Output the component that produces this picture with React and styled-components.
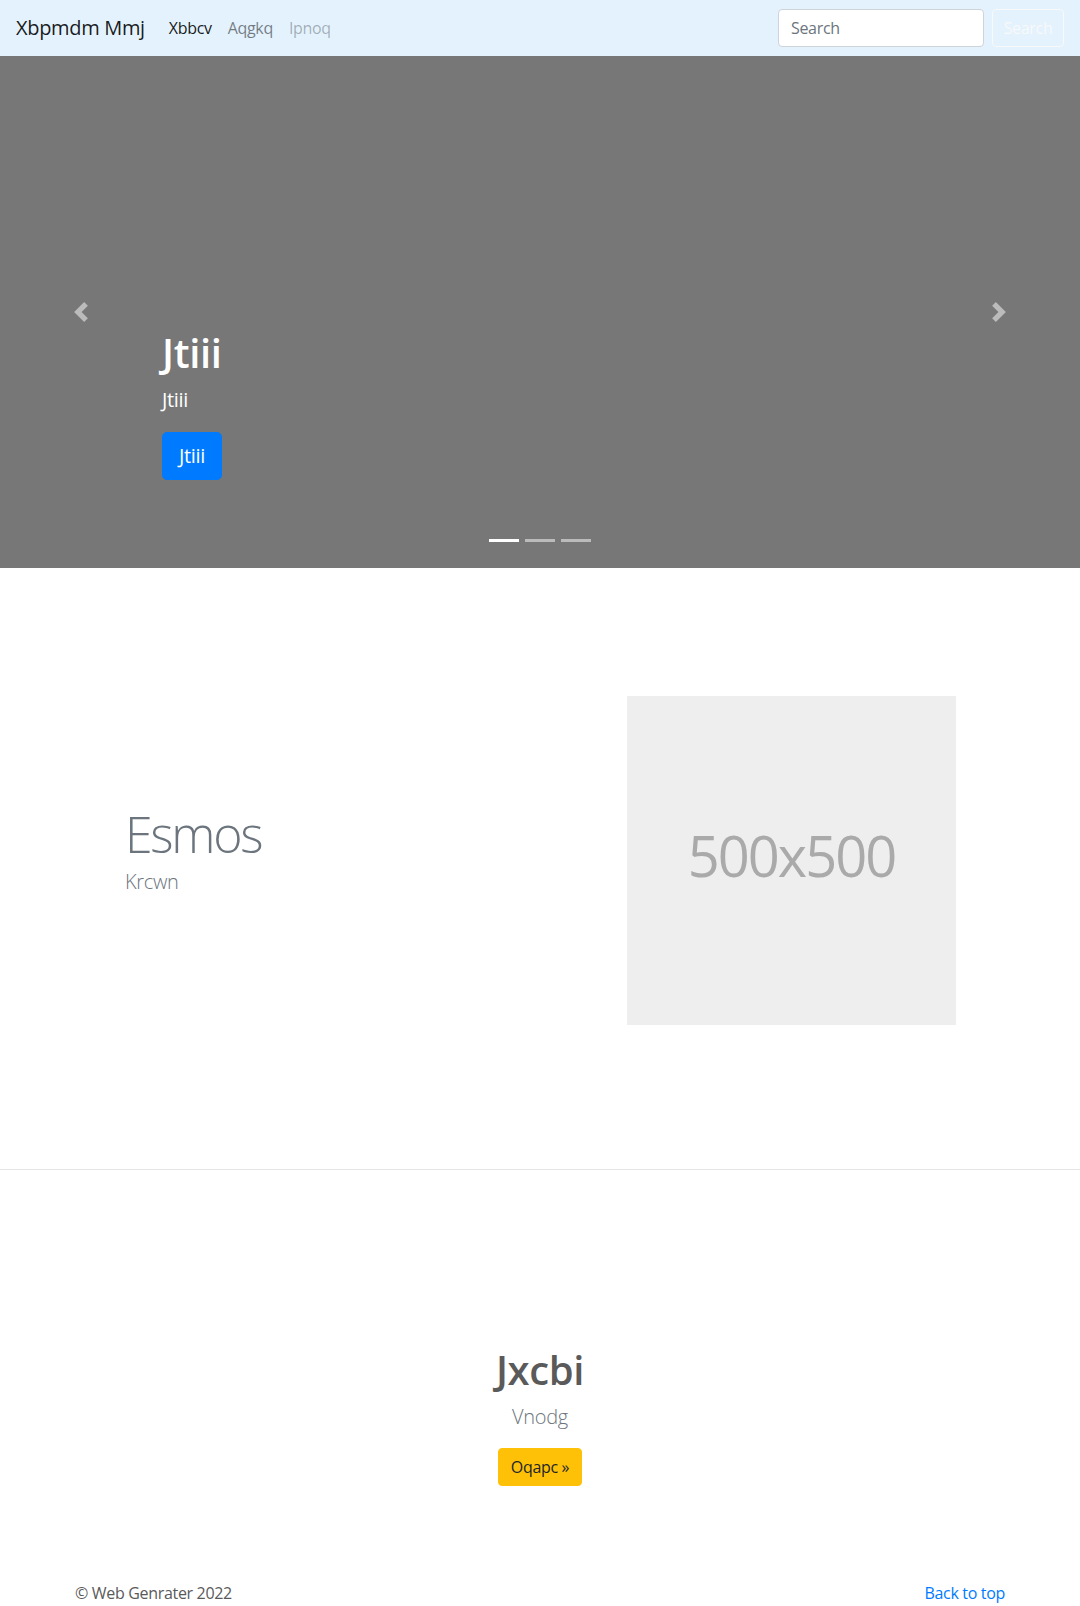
import React from "react";
import styled, { createGlobalStyle } from "styled-components";

const Global = createGlobalStyle`
  html, body { margin: 0; padding: 0; overflow: hidden; }
  body {
    font-family: "Open Sans", "Noto Sans", "Liberation Sans", sans-serif;
    font-size: 16px;
    line-height: 1.5;
    letter-spacing: -0.02em;
    color: #5a5a5a;
    background: #fff;
  }
  * { box-sizing: border-box; }
`;

const Navbar = styled.nav`
  display: flex;
  align-items: center;
  height: 56px;
  padding: 8px 16px;
  background: #e3f2fd;
`;

const Brand = styled.a`
  font-size: 20px;
  line-height: 30px;
  padding: 5px 0;
  margin-right: 16px;
  color: rgba(0, 0, 0, 0.9);
  text-decoration: none;
  white-space: nowrap;
`;

const NavList = styled.ul`
  display: flex;
  list-style: none;
  margin: 0;
  padding: 0;
`;

const NavLink = styled.a`
  display: block;
  padding: 8px;
  line-height: 24px;
  text-decoration: none;
  color: ${(p) =>
    p.$state === "active"
      ? "rgba(0,0,0,.9)"
      : p.$state === "disabled"
      ? "rgba(0,0,0,.3)"
      : "rgba(0,0,0,.5)"};
`;

const SearchForm = styled.form`
  display: flex;
  gap: 8px;
  margin-left: auto;
`;

const SearchInput = styled.input`
  width: 206px;
  height: 38px;
  padding: 6px 12px;
  font: inherit;
  font-size: 16px;
  letter-spacing: -0.02em;
  color: #495057;
  background: #fff;
  border: 1px solid #ced4da;
  border-radius: 4px;
  outline: none;
  &::placeholder { color: #6c757d; }
`;

const OutlineButton = styled.button`
  width: 72px;
  height: 38px;
  padding: 6px 0;
  font: inherit;
  font-size: 16px;
  letter-spacing: -0.02em;
  color: #f8f9fa;
  background: transparent;
  border: 1px solid #f8f9fa;
  border-radius: 4px;
`;

const Carousel = styled.section`
  position: relative;
  height: 512px;
  background: #777;
  display: flex;
  align-items: flex-end;
  padding: 0 15% 52px;
`;

const Caption = styled.div`
  padding: 20px 0;
  color: #fff;
  position: relative;
  z-index: 2;
`;

const CaptionTitle = styled.h1`
  margin: 0 0 8px;
  font-size: 40px;
  line-height: 1.2;
  font-weight: 600;
`;

const CaptionText = styled.p`
  margin: 0 0 ${(p) => p.$mb}px;
  font-size: 20px;
  line-height: 30px;
`;

const PrimaryLgButton = styled.a`
  display: inline-block;
  vertical-align: top;
  padding: 8px 16px;
  font-size: 20px;
  line-height: 30px;
  color: #fff;
  background: #007bff;
  border: 1px solid #007bff;
  border-radius: 4.8px;
  text-decoration: none;
`;

const Control = styled.a`
  position: absolute;
  top: 0;
  bottom: 0;
  ${(p) => (p.$side === "left" ? "left: 0;" : "right: 0;")}
  width: 15%;
  display: flex;
  align-items: center;
  justify-content: center;
  opacity: 0.5;
`;

const Indicators = styled.ol`
  position: absolute;
  left: 0;
  right: 0;
  bottom: 0;
  margin: 0 0 16px;
  padding: 0;
  list-style: none;
  display: flex;
  justify-content: center;
  z-index: 3;
`;

const Indicator = styled.li`
  width: 30px;
  height: 3px;
  margin: 10px 3px;
  background: #fff;
  opacity: ${(p) => (p.$active ? 1 : 0.5)};
`;

const Featurette = styled.section`
  display: flex;
  align-items: center;
  padding: 128px 124px 144px 125px;
  border-bottom: 1px solid rgba(0, 0, 0, 0.1);
`;

const FeatureText = styled.div`
  flex: 1;
`;

const FeatureHeading = styled.h2`
  margin: 0 0 8px;
  font-size: 50px;
  line-height: 1;
  font-weight: 300;
  letter-spacing: -2.3px;
  color: #6c757d;
`;

const Lead = styled.p`
  margin: 0 0 16px;
  font-size: 20px;
  line-height: 30px;
  font-weight: 300;
  color: #6c757d;
`;

const Placeholder = styled.svg`
  display: block;
  width: 329px;
  height: 329px;
  flex: none;
`;

const Highlight = styled.section`
  padding: 176px 0 96px;
  text-align: center;
`;

const HighlightHeading = styled.h2`
  margin: 0 0 8px;
  font-size: 40px;
  line-height: 1.2;
  font-weight: 600;
  letter-spacing: -0.01em;
  color: #5a5a5a;
`;

const WarningButton = styled.a`
  display: inline-block;
  vertical-align: top;
  padding: 6px 12px;
  font-size: 16px;
  line-height: 24px;
  color: #212529;
  background: #ffc107;
  border: 1px solid #ffc107;
  border-radius: 4px;
  text-decoration: none;
`;

const ButtonRow = styled.p`
  margin: 0;
`;

const Footer = styled.footer`
  max-width: 960px;
  margin: 0 auto;
  padding: 0 15px;
  display: flex;
  justify-content: space-between;
  line-height: 23px;
`;

const FooterText = styled.p`
  margin: 0;
  color: #5a5a5a;
`;

const FooterLink = styled.a`
  color: #007bff;
  text-decoration: none;
`;

const Chevron = ({ dir }) => (
  <svg width="20" height="20" viewBox="0 0 8 8" fill="#fff">
    {dir === "left" ? (
      <path d="M5.25 0l-4 4 4 4 1.5-1.5L4.25 4l2.5-2.5L5.25 0z" />
    ) : (
      <path d="M2.75 0l-1.5 1.5L3.75 4l-2.5 2.5L2.75 8l4-4-4-4z" />
    )}
  </svg>
);

export default function App() {
  return (
    <>
      <Global />
      <Navbar>
        <Brand href="#">Xbpmdm Mmj</Brand>
        <NavList>
          <li><NavLink href="#" $state="active">Xbbcv</NavLink></li>
          <li><NavLink href="#">Aqgkq</NavLink></li>
          <li><NavLink href="#" $state="disabled">Ipnoq</NavLink></li>
        </NavList>
        <SearchForm onSubmit={(e) => e.preventDefault()}>
          <SearchInput type="search" placeholder="Search" />
          <OutlineButton type="submit">Search</OutlineButton>
        </SearchForm>
      </Navbar>

      <Carousel>
        <Indicators>
          <Indicator $active />
          <Indicator />
          <Indicator />
        </Indicators>
        <Caption>
          <CaptionTitle>Jtiii</CaptionTitle>
          <CaptionText $mb={17}>Jtiii</CaptionText>
          <CaptionText $mb={16}>
            <PrimaryLgButton href="#">Jtiii</PrimaryLgButton>
          </CaptionText>
        </Caption>
        <Control href="#" $side="left"><Chevron dir="left" /></Control>
        <Control href="#" $side="right"><Chevron dir="right" /></Control>
      </Carousel>

      <Featurette>
        <FeatureText>
          <FeatureHeading>Esmos</FeatureHeading>
          <Lead>Krcwn</Lead>
        </FeatureText>
        <Placeholder viewBox="0 0 329 329">
          <rect width="100%" height="100%" fill="#eee" />
          <text
            x="50%"
            y="50%"
            dy=".3em"
            fill="#aaa"
            textAnchor="middle"
            fontSize="56"
            letterSpacing="-2"
            fontFamily='"Open Sans", "Noto Sans", sans-serif'
          >
            500x500
          </text>
        </Placeholder>
      </Featurette>

      <Highlight>
        <HighlightHeading>Jxcbi</HighlightHeading>
        <Lead>Vnodg</Lead>
        <ButtonRow>
          <WarningButton href="#">Oqapc »</WarningButton>
        </ButtonRow>
      </Highlight>

      <Footer>
        <FooterText>© Web Genrater 2022</FooterText>
        <FooterLink href="#">Back to top</FooterLink>
      </Footer>
    </>
  );
}
